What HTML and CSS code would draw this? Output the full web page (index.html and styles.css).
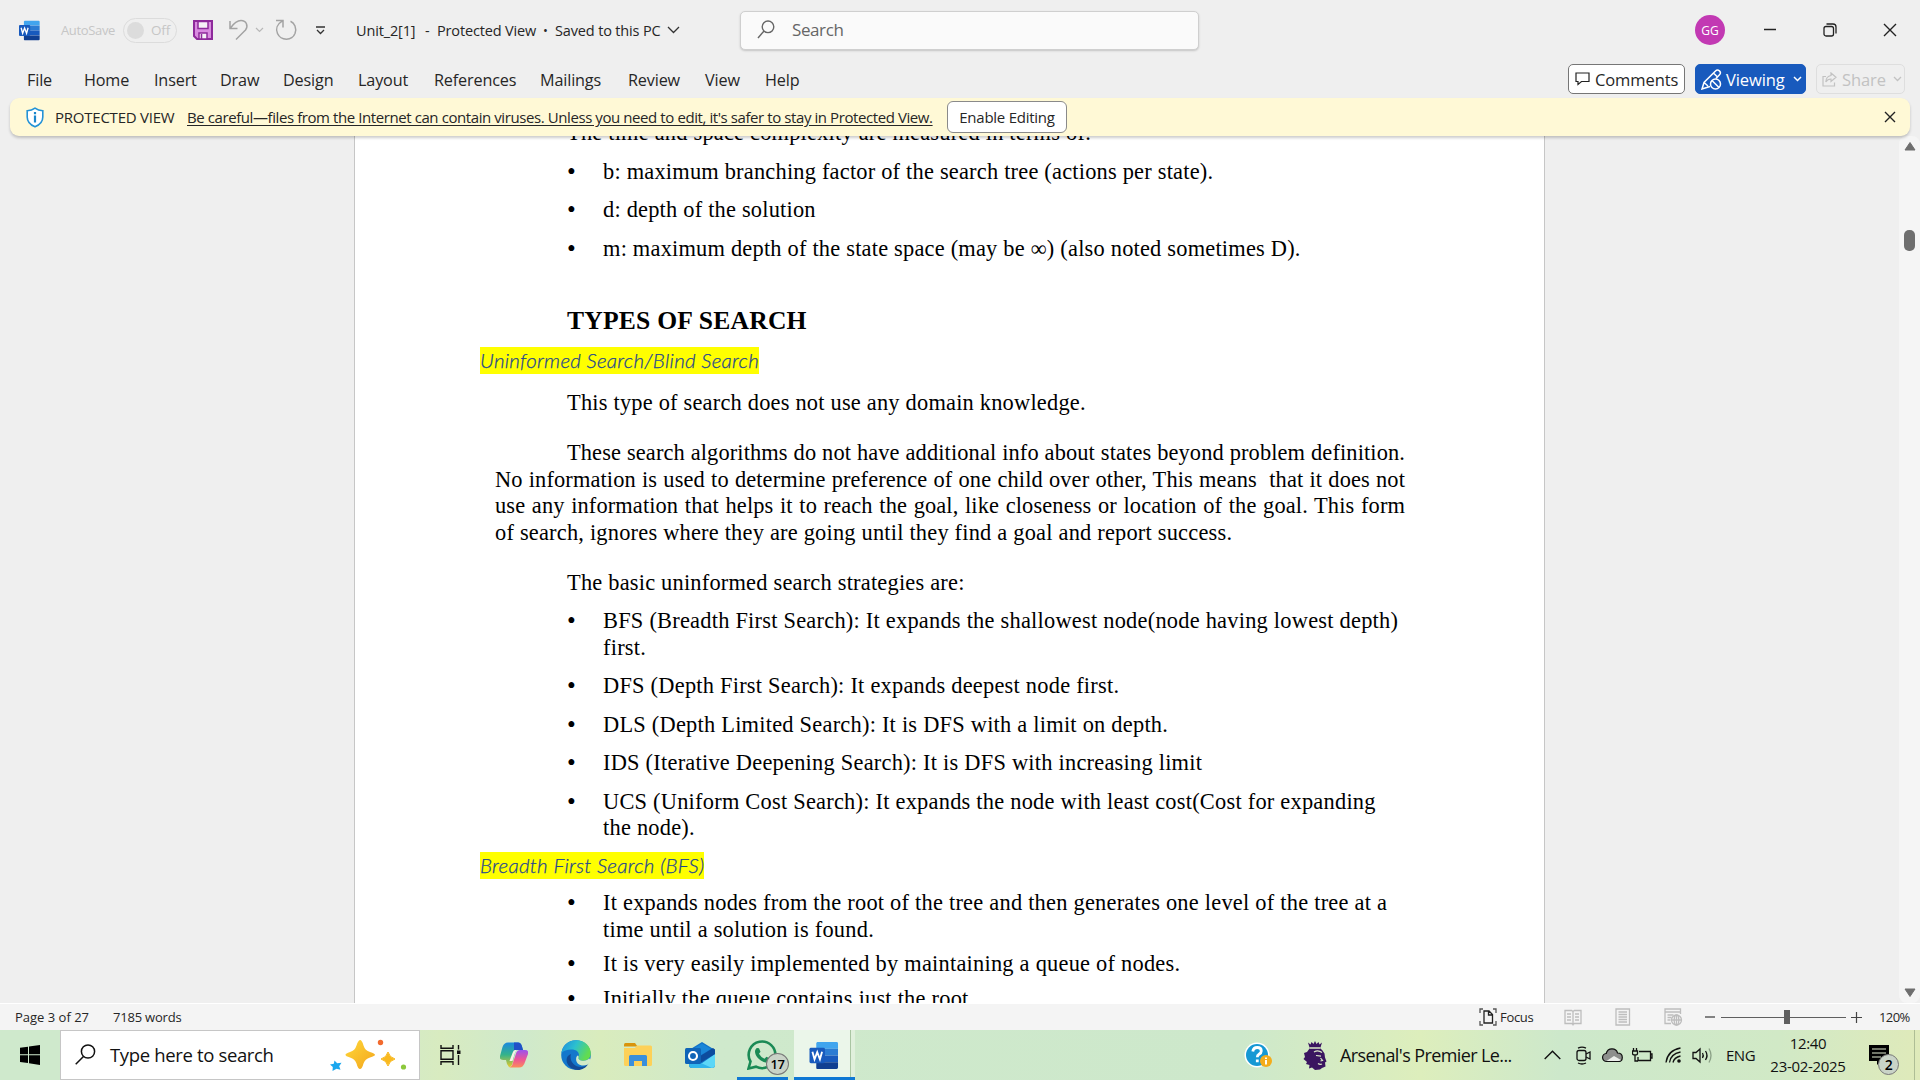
FILE: index.html
```html
<!DOCTYPE html>
<html lang="en">
<head>
<meta charset="utf-8">
<title>Unit_2[1] - Word</title>
<link rel="stylesheet" href="styles.css">
</head>
<body>
<svg class="defs" width="0" height="0" aria-hidden="true">
  <symbol id="word" viewBox="0 0 30 30">
    <path d="M8 1h20a1.500 1.500 0 0 1 1.500 1.500V8H7V2z" fill="#41a5ee"/>
    <path d="M7 8h22.500v7H7z" fill="#2b7cd3"/>
    <path d="M7 15h22.500v7H7z" fill="#185abd"/>
    <path d="M7 22h22.500v5.500A1.500 1.500 0 0 1 28 29H8a1 1 0 0 1-1-1z" fill="#103f91"/>
    <rect x="0" y="7" width="16" height="16" rx="1.500" fill="#185abd"/>
    <path d="M3 11l2.200 8 2.800-7.500 2.800 7.500L13 11" fill="none" stroke="#fff" stroke-width="1.900"/>
  </symbol>
</svg>

<header class="titlebar">
  <svg class="app-logo" width="21" height="21"><use href="#word"/></svg>
  <span class="dim autosave">AutoSave</span>
  <span class="toggle"><i></i><span class="dim off">Off</span></span>
  <svg width="20" height="20" viewBox="0 0 20 20"><path d="M1 1h18v18H4l-3-3z" fill="#d98be0" stroke="#8e2a9b" stroke-width="2"/><path d="M5 1.500h10v7H5zM6 13h8v6H6z" fill="#f6f0f7" stroke="#8e2a9b" stroke-width="1.500"/><path d="M8.500 14v5" stroke="#8e2a9b" stroke-width="1.500"/></svg>
  <svg width="20" height="22" viewBox="0 0 20 22"><path d="M1 2v7.500h7.500M1.500 9C5 4 8 1.500 12 1.500c5.500 0 7.500 5.500 4.500 9.500L7 20.500" fill="none" stroke="#a3a3a3" stroke-width="1.500"/></svg>
  <svg width="9" height="6" viewBox="0 0 9 6"><path d="M1 1l3.500 3.500L8 1" fill="none" stroke="#b8b8b8" stroke-width="1.200"/></svg>
  <svg width="23" height="22" viewBox="0 0 23 22"><path d="M1 1.500h7v7M7.500 1.800C2 5 .5 10 2.500 14.500c3.500 7.500 14.500 7.500 17.500 0C22 9 19.500 4 15.500 2.300" fill="none" stroke="#a3a3a3" stroke-width="1.500"/></svg>
  <svg width="11" height="9" viewBox="0 0 11 9"><path d="M1 1h9M2 4l3.500 3.500L9 4" fill="none" stroke="#333" stroke-width="1.300"/></svg>
  <span class="small">Unit_2[1]</span>
  <span class="small">-</span>
  <span class="small">Protected View</span>
  <span class="small dot">•</span>
  <span class="small">Saved to this PC</span>
  <svg width="13" height="8" viewBox="0 0 13 8"><path d="M1 1l5.500 5.500L12 1" fill="none" stroke="#333" stroke-width="1.300"/></svg>
  <div class="search">
    <svg width="18" height="19" viewBox="0 0 18 19"><circle cx="11" cy="6.800" r="5.800" fill="none" stroke="#666" stroke-width="1.400"/><path d="M7 11L1 18" stroke="#666" stroke-width="1.400"/></svg>
    <span>Search</span>
  </div>
  <span class="avatar">GG</span>
  <svg width="14" height="14" viewBox="0 0 14 14"><path d="M1 6.500h12" stroke="#222" stroke-width="1.500"/></svg>
  <svg width="14" height="14" viewBox="0 0 14 14"><rect x="1" y="3.500" width="9.500" height="9.500" rx="2" fill="none" stroke="#222" stroke-width="1.300"/><path d="M3.500 1H10a3 3 0 0 1 3 3v6.500" fill="none" stroke="#222" stroke-width="1.300"/></svg>
  <svg width="14" height="14" viewBox="0 0 14 14"><path d="M1 1l12 12M13 1L1 13" stroke="#222" stroke-width="1.400"/></svg>
</header>

<nav class="menubar">
  <span>File</span><span>Home</span><span>Insert</span><span>Draw</span><span>Design</span><span>Layout</span><span>References</span><span>Mailings</span><span>Review</span><span>View</span><span>Help</span>
  <div class="actions">
    <div class="btn comments"><svg width="15" height="14" viewBox="0 0 15 14"><path d="M1 1h13v8.500H6.500L3 12.500V9.500H1z" fill="none" stroke="#222" stroke-width="1.200"/></svg><span>Comments</span></div>
    <div class="btn viewing"><svg width="21" height="21" viewBox="0 0 21 21" fill="none" stroke="#fff" stroke-width="1.500"><path d="M9 17.500L1 20l2-6.500L14.500 2a2.600 2.600 0 0 1 4 3.800L15 9.500M3 13.500L7 17M12.500 4l4 4"/><circle cx="14.500" cy="15" r="5"/><path d="M11 11.500l7 7"/></svg><span>Viewing</span><svg width="9" height="6" viewBox="0 0 9 6"><path d="M1 1l3.500 3.500L8 1" fill="none" stroke="#fff" stroke-width="1.500"/></svg></div>
    <div class="btn share"><svg width="15" height="15" viewBox="0 0 15 15" fill="none" stroke="#c2c2c2" stroke-width="1.200"><path d="M4 4.500H1V14h11.500v-3.500"/><path d="M9 1l5 4.300-5 4.200V7C6.500 7 5 8 3.800 10 4 6 6 4 9 3.500z"/></svg><span>Share</span><svg width="9" height="6" viewBox="0 0 9 6"><path d="M1 1l3.500 3.500L8 1" fill="none" stroke="#c2c2c2" stroke-width="1.300"/></svg></div>
  </div>
</nav>

<section class="infobar">
  <svg width="18" height="21" viewBox="0 0 18 21"><path d="M9 1.200c2.300 1.700 4.800 2.500 7.800 2.600V10c0 5-3.300 8-7.800 9.800C4.500 18 1.200 15 1.200 10V3.800C4.200 3.700 6.700 2.900 9 1.200z" fill="#fff" stroke="#2392d6" stroke-width="1.600"/><path d="M9 5v2.200M9 8.500v7" stroke="#1a86cc" stroke-width="2.200"/></svg>
  <span class="pv">PROTECTED VIEW</span>
  <span class="warn">Be careful—files from the Internet can contain viruses. Unless you need to edit, it's safer to stay in Protected View.</span>
  <span class="enable"><span>Enable Editing</span></span>
  <svg width="12" height="12" viewBox="0 0 12 12"><path d="M1 1l10 10M11 1L1 11" stroke="#222" stroke-width="1.400"/></svg>
</section>

<main class="workspace">
  <article class="page">
    <p class="ind first">The time and space complexity are measured in terms of:</p>
    <ul>
      <li>b: maximum branching factor of the search tree (actions per state).</li>
      <li>d: depth of the solution</li>
      <li>m: maximum depth of the state space (may be ∞) (also noted sometimes D).</li>
    </ul>
    <h1>TYPES OF SEARCH</h1>
    <h2 class="hl-a"><mark>Uninformed Search/Blind Search</mark></h2>
    <p class="ind domain">This type of search does not use any domain knowledge.</p>
    <p class="just">
      <span class="full lead">These search algorithms do not have additional info about states beyond problem definition.</span>
      <span class="full">No information is used to determine preference of one child over other, This means&nbsp; that it does not</span>
      <span class="full">use any information that helps it to reach the goal, like closeness or location of the goal. This form</span>
      <span class="last">of search, ignores where they are going until they find a goal and report success.</span>
    </p>
    <p class="ind basic">The basic uninformed search strategies are:</p>
    <ul class="strategies">
      <li>BFS (Breadth First Search): It expands the shallowest node(node having lowest depth)<br>first.</li>
      <li>DFS (Depth First Search): It expands deepest node first.</li>
      <li>DLS (Depth Limited Search): It is DFS with a limit on depth.</li>
      <li>IDS (Iterative Deepening Search): It is DFS with increasing limit</li>
      <li>UCS (Uniform Cost Search): It expands the node with least cost(Cost for expanding<br>the node).</li>
    </ul>
    <h2 class="hl-b"><mark>Breadth First Search (BFS)</mark></h2>
    <ul class="tight">
      <li>It expands nodes from the root of the tree and then generates one level of the tree at a<br>time until a solution is found.</li>
      <li>It is very easily implemented by maintaining a queue of nodes.</li>
      <li>Initially the queue contains just the root</li>
    </ul>
  </article>
  <aside class="scroll">
    <svg width="12" height="10" viewBox="0 0 12 10"><path d="M6 1.500L11 9H1z" fill="#6e6e6e" stroke="#6e6e6e" stroke-linejoin="round"/></svg>
    <i></i>
    <svg class="down" width="12" height="10" viewBox="0 0 12 10"><path d="M6 8.500L11 1H1z" fill="#6e6e6e" stroke="#6e6e6e" stroke-linejoin="round"/></svg>
  </aside>
</main>

<footer class="status">
  <span>Page 3 of 27</span>
  <span class="s-words">7185 words</span>
  <svg width="18" height="18" viewBox="0 0 18 18" fill="none" stroke="#222" stroke-width="1.300"><path d="M4 1H1v4M1 13v4h3M14 1h3v4M17 13v4h-3" stroke="#555"/><path d="M5 3h5l3.500 3.500V15H5zM9.500 3v4h4"/></svg>
  <span class="s-focus">Focus</span>
  <svg width="18" height="17" viewBox="0 0 18 17" fill="none" stroke="#bdbdbd" stroke-width="1.300"><path d="M1 1.500h6.500L9 2.500l1.500-1H17v13h-6.500L9 15.500l-1.500-1H1zM9 2.500v14M3 5h4M3 8h4M3 11h4M11 5h4M11 8h4M11 11h4"/></svg>
  <svg width="16" height="18" viewBox="0 0 16 18" fill="none" stroke="#bdbdbd" stroke-width="1.300"><path d="M1 1h13.500v16H1zM3.500 4h8.500M3.500 6.500h8.500M3.500 9h8.500M3.500 11.500h8.500M3.500 14h8.500"/></svg>
  <svg width="19" height="18" viewBox="0 0 19 18" fill="none" stroke="#bdbdbd" stroke-width="1.300"><path d="M7 15.500H1V1h15.500v5M1 4h15M3.500 7h6M3.500 9.500h4M3.500 12h3"/><circle cx="12.500" cy="12" r="5"/><path d="M7.500 12h10M12.500 7v10"/><ellipse cx="12.500" cy="12" rx="2.300" ry="5"/></svg>
  <svg width="10" height="2"><path d="M0 1h10" stroke="#444" stroke-width="1.300"/></svg>
  <span class="zoom"><i></i></span>
  <svg width="11" height="11" viewBox="0 0 11 11"><path d="M0 5.500h11M5.500 0v11" stroke="#444" stroke-width="1.200"/></svg>
  <span class="s-zoom">120%</span>
</footer>

<div class="taskbar">
  <div class="start"><svg width="20" height="20" viewBox="0 0 20 20"><path d="M0 2.800L8 1.700v7.600H0zM9 1.500L20 0v9.300H9zM0 10.300h8v7.800L0 17zM9 10.300h11V20L9 18.300z"/></svg></div>
  <div class="tb-search">
    <svg width="21" height="21" viewBox="0 0 21 21" fill="none" stroke="#111" stroke-width="1.500"><circle cx="13" cy="7.500" r="6.600"/><path d="M8.500 12.500L.7 20.300"/></svg>
    <span>Type here to search</span>
    <svg width="78" height="32" viewBox="0 0 78 32"><defs><linearGradient id="gold" x1="0" y1="0" x2="1" y2="1"><stop offset="0" stop-color="#ffd83a"/><stop offset="1" stop-color="#f3a51c"/></linearGradient></defs><path d="M30 1q2 0 3.500 5.500Q35 11.500 40 13q5 1.500 5 2.800t-5 2.700q-5 1.500-6.500 6Q32 30 30 30t-3.500-5.500q-1.500-4.500-6.500-6-4.500-1.300-4.500-2.700T20 13q5-1.500 6.500-6.500T30 1z" fill="url(#gold)"/><path d="M58 13q1.500 5.500 7 7-5.500 1.500-7 7-1.500-5.500-7-7 5.500-1.500 7-7z" fill="#f9b91f" stroke="#f9b91f"/><path d="M4.500 21.500l2.700 2.800 4.300-.6-2.300 3.500 1.300 3.600-4-1L2.500 32l.3-4L0 25.500l3.800-.7z" fill="#1ba7ee"/><circle cx="50.500" cy="3.500" r="2.700" fill="#f26a2e"/><circle cx="73.500" cy="28" r="2.600" fill="#8cc83c"/></svg>
  </div>
  <svg width="22" height="20" viewBox="0 0 22 20" fill="none" stroke="#111" stroke-width="1.400"><path d="M1 0v3.300h12V0M1 20v-3.300h12V20M1 5.700h12v8.600H1zM18.500 0v4.500M18.500 10v10"/><path d="M17 5.500h3.500v3.500H17z" fill="#111" stroke="none"/></svg>
  <svg width="28" height="26" viewBox="0 0 28 26"><defs><linearGradient id="cpa" x1="0" y1="0" x2="0" y2="1"><stop offset="0" stop-color="#1b88e0"/><stop offset=".5" stop-color="#34b38a"/><stop offset="1" stop-color="#e8c92b"/></linearGradient><linearGradient id="cpb" x1="0" y1="0" x2="0" y2="1"><stop offset="0" stop-color="#9a52ee"/><stop offset=".55" stop-color="#ee5595"/><stop offset="1" stop-color="#fb8d5a"/></linearGradient></defs><path d="M14 .5h4q3 0 4 4L23 8h-5q-2 0-3 3l-2 8q-1 6-4 6l-2-3-1-4H3q-4 0-3-4L2.500 5Q4 .5 8 .5z" fill="url(#cpa)"/><path d="M14 .5h4q3 0 4 4L23 8h-9z" fill="#2250c8"/><path d="M20 8h5q4 0 3 4l-3 8q-1.500 5.500-6 5.500H9q3-.5 4-5l3-9q1-3.500 4-3.500z" fill="url(#cpb)"/><path d="M15 8h3q-2 0-3 3l-2.500 8h-3l3-8q1-3 2.500-3z" fill="#f4f4e6"/></svg>
  <svg width="30" height="30" viewBox="0 0 30 30"><defs><linearGradient id="edg" x1="0" y1="0" x2="1" y2=".4"><stop offset="0" stop-color="#1d8be0"/><stop offset=".5" stop-color="#2cc0cf"/><stop offset="1" stop-color="#62dc50"/></linearGradient></defs><circle cx="15" cy="15" r="14.800" fill="#1377cc"/><path d="M.5 13C1.500 5 7 .2 15 .2c9 0 15 6.300 14.800 13.300 0 4.500-3.300 7.200-7.300 7.200-3.500 0-5.500-1.500-5-3 1.500-3.300-.3-7.500-5.500-8.200C7 9 2.500 10.500.5 13z" fill="url(#edg)"/><path d="M10 14c-2 7 3 13 10 13 2.500 0 5-1 7.500-3.500-4 8-15 8.500-20 2-3.500-5-2-10 2.500-11.500z" fill="#124a96"/><path d="M17.500 17.700c-.5 1.500 1.500 3 5 3 2.500 0 4.500-1 5.800-2.500l1.500 3-3 3.300c-6 3-12-.5-11.700-5.500 0-2 1-3.500 2-3.500.5.500.8 1.500.4 2.200z" fill="#d3ebc8"/></svg>
  <svg width="28" height="24" viewBox="0 0 28 24"><path d="M0 1.500Q0 0 1.500 0h9.500l2.500 3.500H0z" fill="#d9940b"/><path d="M0 5h11l2-2.500h13.500Q28 2.500 28 4v17.500q0 1.500-1.500 1.500h-25Q0 23 0 21.500z" fill="#fdd158"/><path d="M5 23v-9.500Q5 12 6.500 12h15q1.500 0 1.500 1.500V23h-5v-5h-8v5z" fill="#3a8fdc"/></svg>
  <svg width="30" height="27" viewBox="0 0 30 27"><path d="M4 8L17 0l13 8v15q0 3-3 3H7q-3 0-3-3z" fill="#1272c8"/><path d="M8 7l9-5.500L26 7 13 15z" fill="#1a86d8"/><path d="M30 12v11q0 3-3 3H10z" fill="#5cd7f8"/><path d="M12 16L28 6l2 1.500V12L15 21z" fill="#0d4c9e"/><path d="M4 22l12-1 11 5H7q-3 0-3-4z" fill="#30b5ec"/><rect y="6" width="16" height="16" rx="1.500" fill="#0f64b8"/><circle cx="8" cy="14" r="4" fill="none" stroke="#fff" stroke-width="2.100"/></svg>
  <div class="task whatsapp"><svg width="30" height="30" viewBox="0 0 30 30"><path d="M1.500 28.500l2-7A13.300 13.300 0 1 1 9 26.700z" fill="none" stroke="#1b8a55" stroke-width="2.600"/><path d="M10 8l2 .2 1.500 3.500-1.500 2q2 3.500 5.500 5l2-2 3.500 2c0 2.500-2 4-4.500 3.800C13 21.500 8 16 8 11.500 8 10 8.800 8.500 10 8z" fill="#1b8a55"/></svg><b class="badge">17</b></div>
  <div class="task word-task"><svg width="30" height="29"><use href="#word"/></svg></div>
  <svg width="28" height="26" viewBox="0 0 28 26"><circle cx="13" cy="13" r="12.500" fill="#fff"/><circle cx="13" cy="13" r="11" fill="#1698d4"/><path d="M8.800 9.500q.5-4 4.500-4 4 0 4 3.500 0 2-2.300 3.300-1.700 1-1.700 3M13.300 17.500v2.700" fill="none" stroke="#fff" stroke-width="2.800"/><circle cx="22" cy="19" r="6" fill="#f4ac1b"/><path d="M22 15.500v1.500M22 18v4.500" stroke="#fff" stroke-width="1.900"/></svg>
  <svg width="24" height="29" viewBox="0 0 24 29"><path d="M5 1.500l2.500 2L8.500 1l2 2L12 0l1.500 3 2-2 1 2.500L19 1.500l-1.500 5h-11z" fill="#3a1560"/><path d="M6.500 7.500h11l2 2 2 3 .5 4 1.500 4-1.500 1 .5 4-3.500 1.500-2 1.500-5 .5-3-2.500-3 1 .5-3.500-3.500-1 1-2L.5 18l1.500-2-1-4 3-1z" fill="#3a1560"/><path d="M11 11q4-2.500 8 .5M13 14.500l5 .7M17.500 17l2 2.500-2 .5M15 22.500q2 1.500 4 .5M7 7h10" stroke="#dceac8" stroke-width="1.200" fill="none"/></svg>
  <span class="news">Arsenal's Premier Le...</span>
  <svg width="17" height="10" viewBox="0 0 17 10"><path d="M.7 9L8.500 1.200 16.300 9" fill="none" stroke="#111" stroke-width="1.400"/></svg>
  <svg width="15" height="19" viewBox="0 0 15 19" fill="none" stroke="#111" stroke-width="1.300"><rect x="1" y="4.500" width="9" height="10" rx="2"/><path d="M10 8l4-2v7l-4-2M2 2.200Q6 .2 10 2.200M2 17q4 2 8 0"/></svg>
  <svg width="21" height="15" viewBox="0 0 21 15"><path d="M5 13.500a4 4 0 0 1-.8-8C5 2 7.500.8 10 .8c3 0 5 2 5.500 4.200 3 0 4.800 2 4.800 4.400 0 2.300-1.800 4.100-4.300 4.100z" fill="#8d8f8d" stroke="#111" stroke-width="1.200"/><path d="M4.500 13L12 8l7 4q-1 1-3 1z" fill="#ecefec"/></svg>
  <svg width="21" height="15" viewBox="0 0 21 15" fill="none" stroke="#111" stroke-width="1.300"><path d="M7 3.500h11.500v9H6V9M18.500 6H20v4h-1.500"/><path d="M1.500 0v3M4.500 0v3M.5 3h5v2.500Q5.500 7 3 7T.5 5.500zM3 7v6h3"/></svg>
  <svg width="17" height="17" viewBox="0 0 17 17" fill="none" stroke="#111" stroke-width="1.300"><path d="M1 15.500Q2.500 3.500 15.500 1M4.500 15.500Q5.500 7 15.500 5M8 15.500Q9 10.500 15.500 9"/><circle cx="14" cy="14" r="1.800" fill="#111" stroke="none"/></svg>
  <svg width="21" height="17" viewBox="0 0 21 17" fill="none" stroke="#111" stroke-width="1.300"><path d="M1 5.500h3L8 2v13l-4-3.500H1z"/><path d="M10.500 6q1.500 2.500 0 5M13.500 4q3 4.500 0 9"/><path d="M17 1.500q4 7 0 14" stroke="#8aa086"/></svg>
  <span class="eng">ENG</span>
  <div class="clock"><span>12:40</span><span>23-02-2025</span></div>
  <div class="notif"><svg width="20" height="21" viewBox="0 0 20 21"><path d="M0 0h20v16h-8l-4 4v-4H0z"/><path d="M3 4h14M3 8h14M3 12h9" stroke="#dfe9d0" stroke-width="1.200"/></svg><b class="badge two">2</b></div>
  <i class="peek"></i>
</div>
</body>
</html>
```
FILE: styles.css
```css
* { box-sizing: border-box; margin: 0; padding: 0; }
body {
  width: 1920px; height: 1080px; overflow: hidden;
  display: flex; flex-direction: column;
  background: #efefef; color: #262626;
  font-family: "Open Sans", "Noto Sans", sans-serif;
  white-space: nowrap;
}
svg { display: block; flex: none; }
.defs { position: absolute; }

/* Title bar */
.titlebar {
  height: 60px; padding-left: 19px; flex: none;
  display: grid; align-items: center;
  grid-template-columns: 42px 62px 70px 36px 26px 20px 40px 41px 69px 12px 106px 12px 112px 73px 955px 68px 60px 60px 30px;
}
.small { font-size: 14.500px; letter-spacing: -0.150px; }
.small.dot { font-size: 13px; }
.dim { color: #c6c6c6; }
.autosave { font-size: 13px; letter-spacing: -0.350px; }
.off { font-size: 13.500px; letter-spacing: -0.200px; }
.toggle {
  width: 54px; height: 25px; border: 1.500px solid #dcdcdc; border-radius: 13px;
  display: flex; align-items: center; gap: 7px; padding-left: 3px;
}
.toggle i { width: 17px; height: 17px; border-radius: 50%; background: #dcdcdc; }
.search {
  width: 459px; height: 39px; border: 1px solid #cfcfcf; border-radius: 5px;
  background: #fafafa; box-shadow: 0 1px 2px #c4c4c4;
  display: flex; align-items: center; gap: 17px; padding: 0 0 2px 16px;
  color: #666; font-size: 17px; letter-spacing: -0.4px;
}
.avatar {
  width: 30px; height: 30px; border-radius: 50%; background: #c239b3; color: #fff;
  font-size: 12px; display: flex; align-items: center; justify-content: center;
}

/* Ribbon tabs */
.menubar {
  height: 38px; padding-left: 27px; flex: none;
  display: grid; align-items: center;
  grid-template-columns: 57px 70px 66px 63px 75px 76px 106px 88px 77px 60px 803px 352px;
  font-size: 16.200px; letter-spacing: -0.150px;
}
.menubar > span { padding-top: 2px; }
.actions { display: flex; gap: 10px; }
.btn {
  height: 30px; border-radius: 5px; border: 1px solid #767676; background: #fff;
  display: flex; align-items: center; font-size: 16.500px; letter-spacing: -0.100px;
}
.comments { width: 117px; padding-left: 6px; gap: 5px; }
.viewing { width: 111px; padding-left: 5px; gap: 4px; background: #185abd; border-color: #185abd; color: #fff; }
.viewing span { width: 63px; }
.share { width: 89px; padding-left: 5px; gap: 5px; background: none; border-color: #dedede; color: #c2c2c2; }
.share span { width: 46px; }

/* Protected View bar */
.infobar {
  height: 38px; margin: 0 10px; padding-left: 16px; flex: none;
  display: grid; align-items: center; z-index: 1;
  grid-template-columns: 29px 132px 760px 937px 12px;
  background: #fff9d6; border-radius: 9px; box-shadow: 0 2px 3px #0003;
  font-size: 15px; letter-spacing: -0.415px;
}
.pv { letter-spacing: -0.230px; }
.warn { text-decoration: underline; text-underline-offset: 2px; }
.enable {
  width: 120px; height: 32px; border: 1px solid #8a8a8a; border-radius: 6px; background: #fff;
  display: flex; align-items: center; justify-content: center; letter-spacing: -0.250px;
}

/* Document */
.workspace {
  height: 867px; flex: none; overflow: hidden;
  display: flex; justify-content: space-between; padding-left: 354px;
}
.page {
  width: 1191px; height: 900px; background: #fff; color: #000;
  border: solid #c6c6c6; border-width: 0 1px;
  padding-left: 125px;
  font: 22.400px/26.500px "Liberation Serif", "Times New Roman", serif;
  letter-spacing: 0.210px;
}
.ind { padding-left: 87px; }
.first { margin-top: -15.750px; }
.page ul { list-style: none; padding-left: 87px; }
.page li { padding-left: 36px; margin-top: 12px; }
.page li::before { content: "•"; float: left; margin-left: -36px; font-size: 25px; }
.page .strategies, .page .tight { letter-spacing: 0.235px; }
.page .strategies li:first-child { margin-top: 11.250px; }
.page h1 { font-size: 25.600px; line-height: 30px; margin-top: 43.250px; padding-left: 87px; }
.page h2 { font: italic 300 20.500px/27px Lato, Carlito, sans-serif; letter-spacing: 0.280px; color: #1f4690; }
.page mark { display: inline-block; height: 27px; background: #ff0; color: inherit; -webkit-text-stroke: 0.250px #1f4690; }
.hl-a { margin-top: 11.500px; }
.hl-b { margin-top: 10.750px; }
.domain { margin-top: 16.250px; }
.just { margin: 23.500px 0 0 15px; width: 910px; letter-spacing: 0.120px; }
.full, .last { display: block; }
.full { text-align-last: justify; }
.lead { padding-left: 72px; }
.last { letter-spacing: 0.210px; }
.basic { margin-top: 24px; }
.page .tight li { margin-top: 8.200px; }
.page .tight li:first-child { margin-top: 11px; }

.scroll {
  width: 21px; background: #f5f5f5; border-radius: 8px;
  display: flex; flex-direction: column; align-items: center; padding: 5px 0 5px;
}
.scroll i { width: 11px; height: 21px; border-radius: 5px; background: #6e6e6e; margin-top: 79px; }
.scroll .down { margin-top: auto; }

/* Status bar */
.status {
  height: 27px; padding-left: 15px; flex: none;
  border-top: 1px solid #fff; background: #f4f4f4;
  display: grid; align-items: center;
  grid-template-columns: 98px 1366px 21px 64px 51px 49px 41px 16px 130px 28px 40px;
  font-size: 13px;
}
.s-words { letter-spacing: -0.200px; }
.s-focus { letter-spacing: -0.300px; }
.zoom { width: 125px; height: 14px; display: flex; align-items: center; padding-left: 63px;
  background: linear-gradient(#5f5f5f, #5f5f5f) 0 7px / 100% 1px no-repeat; }
.zoom i { width: 6px; height: 14px; background: #5f5f5f; }
.s-zoom { letter-spacing: -0.6px; }

/* Taskbar */
.taskbar {
  height: 50px; flex: none; color: #111;
  display: grid; align-items: center;
  grid-template-columns: 60px 380px 60px 61px 63px 61px 52px 57px 450px 59px 37px 204px 32px 26px 30px 33px 27px 34px 44px 99px 45px 6px;
  background: linear-gradient(90deg, #cfe9cc 0, #cfe9cc 360px, #d8ebc0 440px, #cfe9cc 520px, #d9ecbd 600px, #cfe9cc 720px, #cde8cb 1240px, #ddeebc 1420px, #cde8cb 1560px, #d1e9c6 1780px, #dfeaba 1920px);
}
.start { padding-left: 20px; }
.tb-search {
  width: 360px; height: 50px; border: 1px solid #c6c6c6; background: #fff;
  display: grid; align-items: center; grid-template-columns: 35px 220px 78px; padding: 0 0 1px 14px;
  font-size: 18.500px; letter-spacing: -0.350px;
}
.task { height: 50px; display: flex; align-items: center; border-bottom: 3px solid #0f78d4; position: relative; }
.whatsapp { width: 51px; padding: 3px 0 0 10px; }
.word-task {
  width: 61px; padding: 3px 0 0 15px;
  background: linear-gradient(90deg, #ebf6ea 56px, #a9c5a2 56px, #a9c5a2 57px, #e0f0dc 57px);
}
.badge {
  position: absolute; left: 29px; top: 23px; width: 23px; height: 22px;
  border: 1px solid #777; border-radius: 50%; background: #c9d3c7; color: #000;
  font-size: 13px; font-weight: 600; line-height: 20px; text-align: center; letter-spacing: -0.5px;
}
.news { font-size: 18px; letter-spacing: -0.600px; }
.eng { font-size: 15px; letter-spacing: -0.500px; }
.clock { font-size: 15px; line-height: 23px; display: flex; flex-direction: column; align-items: center; width: 76px; letter-spacing: -0.3px; }
.notif { position: relative; height: 21px; }
.notif .two { left: 9px; top: 9px; width: 21px; height: 21px; line-height: 19px; font-size: 14px; }
.peek { height: 50px; border-left: 1px solid #aebd95; }
```
